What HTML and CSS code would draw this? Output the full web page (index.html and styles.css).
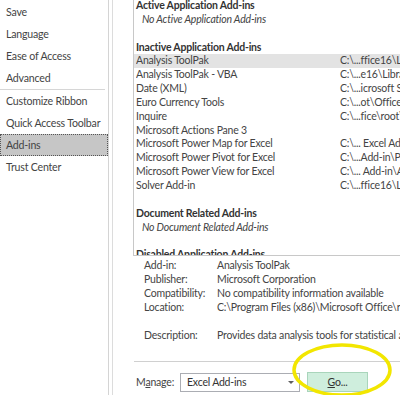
FILE: index.html
```html
<!DOCTYPE html>
<html>
<head>
<meta charset="utf-8">
<link rel="stylesheet" href="styles.css">
</head>
<body>
<div class="app">
  <nav class="sidebar">
    <div class="nav-item">Save</div>
    <div class="nav-item">Language</div>
    <div class="nav-item">Ease of Access</div>
    <div class="nav-item">Advanced</div>
    <div class="nav-sep"></div>
    <div class="nav-item">Customize Ribbon</div>
    <div class="nav-item">Quick Access Toolbar</div>
    <div class="nav-item active">Add-ins</div>
    <div class="nav-item">Trust Center</div>
  </nav>
  <div class="gutter"></div>
  <main class="pane">
    <div class="listbox">
      <div class="list-inner">
        <div class="row head">Active Application Add-ins</div>
        <div class="row empty">No Active Application Add-ins</div>
        <div class="row blank"></div>
        <div class="row head">Inactive Application Add-ins</div>
        <div class="row selected"><span class="name">Analysis ToolPak</span><span class="path">C:\...ffice16\Library\Analysis\ANALYS32.XLL</span></div>
        <div class="row"><span class="name">Analysis ToolPak - VBA</span><span class="path">C:\...e16\Library\Analysis\ATPVBAEN.XLAM</span></div>
        <div class="row"><span class="name">Date (XML)</span><span class="path">C:\...icrosoft Shared\Smart Tag\MOFL.DLL</span></div>
        <div class="row"><span class="name">Euro Currency Tools</span><span class="path">C:\...ot\Office16\Library\EUROTOOL.XLAM</span></div>
        <div class="row"><span class="name">Inquire</span><span class="path">C:\...fice\root\Office16\DCF\NativeShim.dll</span></div>
        <div class="row"><span class="name">Microsoft Actions Pane 3</span><span class="path"></span></div>
        <div class="row"><span class="name">Microsoft Power Map for Excel</span><span class="path">C:\... Excel Add-in\EXCELPLUGINSHELL.DLL</span></div>
        <div class="row"><span class="name">Microsoft Power Pivot for Excel</span><span class="path">C:\...Add-in\PowerPivotExcelClientAddIn.dll</span></div>
        <div class="row"><span class="name">Microsoft Power View for Excel</span><span class="path">C:\... Add-in\AdHocReportingExcelClient.dll</span></div>
        <div class="row"><span class="name">Solver Add-in</span><span class="path">C:\...ffice16\Library\SOLVER\SOLVER.XLAM</span></div>
        <div class="row blank"></div>
        <div class="row head">Document Related Add-ins</div>
        <div class="row empty">No Document Related Add-ins</div>
        <div class="row blank"></div>
        <div class="row head">Disabled Application Add-ins</div>
      </div>
    </div>
    <div class="details">
      <span class="label">Add-in:</span><span class="value">Analysis ToolPak</span>
      <span class="label">Publisher:</span><span class="value">Microsoft Corporation</span>
      <span class="label">Compatibility:</span><span class="value">No compatibility information available</span>
      <span class="label">Location:</span><span class="value">C:\Program Files (x86)\Microsoft Office\root\Office16\Library\Analysis\ANALYS32.XLL</span>
      <span class="label spacer"></span><span class="value spacer"></span>
      <span class="label">Description:</span><span class="value">Provides data analysis tools for statistical and engineering analysis</span>
    </div>
    <div class="bottom-sep"></div>
    <div class="manage">
      <span class="manage-label">M<u>a</u>nage:</span>
      <div class="dropdown"><span>Excel Add-ins</span><span class="arrow"></span></div>
      <div class="go-btn"><u>G</u>o...</div>
    </div>
  </main>
</div>
<svg class="ring" width="110" height="60" viewBox="0 0 110 60">
  <ellipse cx="56" cy="29" rx="48" ry="25" fill="none" stroke="#f2e600" stroke-width="3.5"/>
</svg>
</body>
</html>
```

FILE: styles.css
```css
* { box-sizing: border-box; }
html, body {
  margin: 0;
  padding: 0;
  width: 400px;
  height: 395px;
  overflow: hidden;
  background: #ffffff;
}
body {
  font-family: Lato, "Noto Sans", sans-serif;
  font-size: 10.5px;
  letter-spacing: -0.2px;
  color: #444444;
  position: relative;
}
.app {
  display: flex;
  height: 395px;
}
.sidebar {
  width: 109px;
  flex: none;
  border-right: 1px solid #d4d4d4;
  padding-top: 1px;
  font-size: 10.6px;
}
.nav-item {
  height: 22px;
  line-height: 22px;
  padding-left: 6px;
  white-space: nowrap;
  width: 108px;
}
.nav-item.active {
  background: #c6c6c6;
  outline: 1px dotted #555555;
  outline-offset: -1px;
  width: 108px;
}
.nav-sep {
  height: 1px;
  width: 105px;
  background: #d6d6d6;
}
.gutter {
  width: 4px;
  flex: none;
  border-right: 1px solid #dcdcdc;
}
.pane {
  flex: 1;
  padding-left: 20px;
  display: flex;
  flex-direction: column;
  min-width: 0;
}
.listbox {
  height: 256px;
  width: 300px;
  flex: none;
  overflow: hidden;
  border-left: 1px solid #c8c8c8;
  border-bottom: 1px solid #c8c8c8;
}
.list-inner {
  margin-top: -1px;
}
.row {
  display: flex;
  height: 13.85px;
  line-height: 13.85px;
  padding-left: 2px;
  white-space: nowrap;
}
.row.head {
  font-weight: bold;
  color: #333333;
}
.row.empty {
  font-style: italic;
  padding-left: 8px;
}
.row.selected {
  background: #e3e3e3;
}
.name {
  width: 204px;
  flex: none;
  overflow: hidden;
}
.path {
  flex: none;
}
.details {
  margin-top: 2px;
  padding-left: 11px;
  display: grid;
  grid-template-columns: 73px auto;
  line-height: 14px;
  white-space: nowrap;
}
.details .spacer {
  height: 14px;
}
.bottom-sep {
  margin-top: 19px;
  height: 1px;
  background: #d0d0d0;
  margin-left: 1px;
}
.manage {
  display: flex;
  align-items: center;
  padding-top: 10px;
  padding-left: 3px;
}
.manage-label {
  width: 44px;
}
.dropdown {
  width: 120px;
  height: 19px;
  border: 1px solid #abadb3;
  display: flex;
  align-items: center;
  justify-content: space-between;
  padding: 0 5px 0 6px;
  color: #333333;
}
.arrow {
  width: 0;
  height: 0;
  border-left: 3px solid transparent;
  border-right: 3px solid transparent;
  border-top: 3px solid #606060;
}
.go-btn {
  margin-left: 7px;
  width: 61px;
  height: 20px;
  background: #cfeedd;
  border: 1px solid #a9d5bb;
  text-align: center;
  line-height: 18px;
  color: #333333;
}
.ring {
  position: absolute;
  left: 286px;
  top: 341px;
}
```
